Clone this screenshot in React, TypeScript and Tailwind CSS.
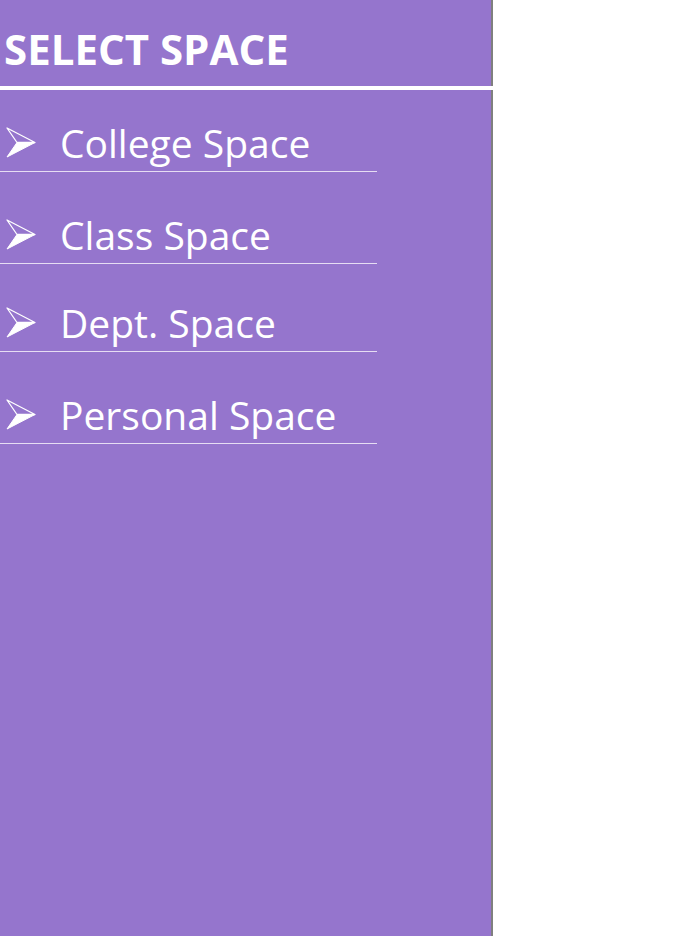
import { ReactNode } from 'react';

const items = [
  { label: 'College Space', h: 'h-[82px]' },
  { label: 'Class Space', h: 'h-[92px]' },
  { label: 'Dept. Space', h: 'h-[88px]' },
  { label: 'Personal Space', h: 'h-[92px]' },
];

function Arrow(): ReactNode {
  return (
    <svg width="30" height="31" viewBox="0 0 30 31" className="shrink-0">
      <polygon points="1,1 29,15.5 11,15.5" fill="none" stroke="white" strokeWidth="1.3" strokeLinejoin="round" />
      <polygon points="11,15.5 29,15.5 1,30" fill="white" stroke="white" strokeWidth="1" strokeLinejoin="round" />
    </svg>
  );
}

export default function App() {
  return (
    <div className="w-[689px] h-[936px] bg-white flex" style={{ fontFamily: '"Open Sans", sans-serif' }}>
      <aside className="w-[493px] h-full bg-[#9575cd] border-r-2 border-[#7f7f7f] flex flex-col">
        {/* Titel */}
        <div className="h-[86px] pt-[28px] pl-[4px]">
          <h1 className="text-[42px] font-bold leading-none text-white">SELECT SPACE</h1>
        </div>
        <div className="h-[4px] bg-white -mr-[2px]" />

        <ul>
          {items.map((item) => (
            <li
              key={item.label}
              className={`${item.h} w-[377px] border-b border-[#e6ddf3] flex items-end pb-[9px]`}
            >
              <div className="flex items-center w-full">
                <div className="w-[60px] pl-[6px] flex items-center">
                  <Arrow />
                </div>
                <span className="text-[39px] leading-none text-white">{item.label}</span>
              </div>
            </li>
          ))}
        </ul>
      </aside>
    </div>
  );
}
